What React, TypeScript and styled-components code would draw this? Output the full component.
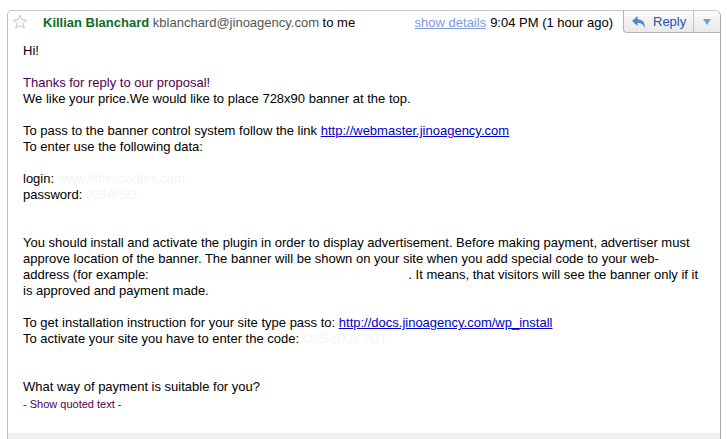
import React from 'react';
import styled, { createGlobalStyle } from 'styled-components';

const GlobalStyle = createGlobalStyle`
  html, body {
    margin: 0;
    padding: 0;
    background: #fff;
  }
  body {
    font-family: "Liberation Sans", Arial, sans-serif;
    font-size: 13px;
    color: #000;
  }
`;

const Page = styled.div`
  padding: 10px 6px 0 7px;
  height: 439px;
  box-sizing: border-box;
`;

const Card = styled.div`
  height: 100%;
  box-sizing: border-box;
  display: flex;
  flex-direction: column;
  border-top: 1px solid #c6c6c6;
  border-left: 1px solid #bdbdbd;
  border-right: 1px solid #a8a8a8;
  border-radius: 5px 6px 0 0;
`;

const Header = styled.div`
  display: flex;
  align-items: flex-start;
  height: 23px;
`;

const StarBox = styled.div`
  width: 16px;
  height: 16px;
  margin: 3px 0 0 4px;
`;

const Sender = styled.div`
  margin: 4px 0 0 15px;
  white-space: nowrap;
`;

const Name = styled.span`
  font-weight: bold;
  color: #0b6d23;
`;

const Email = styled.span`
  color: #555;
`;

const Meta = styled.div`
  margin: 4px 10px 0 auto;
  white-space: nowrap;
`;

const DetailsLink = styled.a`
  color: #7a9be0;
  text-decoration: underline;
  margin-right: 4px;
`;

const ReplyGroup = styled.div`
  display: flex;
  height: 21px;
  border-left: 1px solid #b4b4b4;
  border-bottom: 1px solid #b4b4b4;
  border-radius: 0 5px 0 4px;
  background: linear-gradient(#fbfbfb, #e8e8e8);
`;

const ReplyButton = styled.div`
  display: flex;
  align-items: center;
  gap: 6px;
  width: 70px;
  padding-left: 7px;
  box-sizing: border-box;
  color: #2251b8;
  border-right: 1px solid #c4c4c4;
`;

const MenuButton = styled.div`
  width: 26px;
  display: flex;
  align-items: center;
  justify-content: center;
`;

const Body = styled.div`
  flex: 1;
  padding: 9px 12px 0 15px;
  line-height: 16px;
`;

const Line = styled.div<{ $gapBefore?: number; $purple?: boolean }>`
  margin-top: ${(p) => (p.$gapBefore || 0) * 16}px;
  color: ${(p) => (p.$purple ? '#500050' : '#000')};
  white-space: nowrap;
`;

const Link = styled.a`
  color: #0000cc;
  text-decoration: underline;
`;

const Hidden = styled.span<{ $width?: number; $faint?: boolean }>`
  color: ${(p) => (p.$faint ? '#fdfdfd' : '#f4f4f4')};
  display: ${(p) => (p.$width ? 'inline-block' : 'inline')};
  width: ${(p) => (p.$width ? `${p.$width}px` : 'auto')};
  overflow: hidden;
  vertical-align: top;
`;

const Quoted = styled.div`
  margin-top: 2px;
  font-size: 11px;
  line-height: 14px;
  color: #500050;
`;

const Footer = styled.div`
  height: 6px;
  background: #f0f0f0;
`;

const Star = () => (
  <svg width="16" height="16" viewBox="0 0 16 16">
    <path
      d="M8 1.2l2 4.4 4.7.5-3.5 3.2 1 4.7L8 11.6 3.8 14l1-4.7L1.3 6.1 6 5.6z"
      fill="#fafafa"
      stroke="#c8c8c8"
      strokeWidth="1"
      strokeLinejoin="round"
    />
  </svg>
);

const ReplyArrow = () => (
  <svg width="16" height="14" viewBox="0 0 16 14">
    <path d="M6.5 1 L1 6 L6.5 11 V8 C10 7.6 12.5 9 13.5 13 C14.5 7.5 11.5 4.5 6.5 4.3 Z" fill="#4e86d6" />
  </svg>
);

const Caret = () => (
  <svg width="8" height="6" viewBox="0 0 8 6">
    <path d="M0 0 H8 L4 6 Z" fill="#6f9be0" />
  </svg>
);

export default function App() {
  return (
    <>
      <GlobalStyle />
      <Page>
        <Card>
          <Header>
            <StarBox>
              <Star />
            </StarBox>
            <Sender>
              <Name>Killian Blanchard</Name> <Email>kblanchard@jinoagency.com</Email> to me
            </Sender>
            <Meta>
              <DetailsLink href="#">show details</DetailsLink>9:04 PM (1 hour ago)
            </Meta>
            <ReplyGroup>
              <ReplyButton>
                <ReplyArrow />
                Reply
              </ReplyButton>
              <MenuButton>
                <Caret />
              </MenuButton>
            </ReplyGroup>
          </Header>
          <Body>
            <Line>Hi!</Line>
            <Line $gapBefore={1} $purple>Thanks for reply to our proposal!</Line>
            <Line>We like your price.We would like to place 728x90 banner at the top.</Line>
            <Line $gapBefore={1}>
              To pass to the banner control system follow the link{' '}
              <Link href="#">http://webmaster.jinoagency.com</Link>
            </Line>
            <Line>To enter use the following data:</Line>
            <Line $gapBefore={1}>
              login: <Hidden>www.littlesoodies.com</Hidden>
            </Line>
            <Line>
              password: <Hidden>JGNF5G</Hidden>
            </Line>
            <Line $gapBefore={2}>
              You should install and activate the plugin in order to display advertisement. Before making payment, advertiser must
            </Line>
            <Line>
              approve location of the banner. The banner will be shown on your site when you add special code to your web-
            </Line>
            <Line>
              address (for example: <Hidden $width={256} $faint>http://www.littlesoodies.com/?jino=1</Hidden>. It means, that visitors will
              see the banner only if it
            </Line>
            <Line>is approved and payment made.</Line>
            <Line $gapBefore={1}>
              To get installation instruction for your site type pass to:{' '}
              <Link href="#">http://docs.jinoagency.com/wp_install</Link>
            </Line>
            <Line>
              To activate your site you have to enter the code: <Hidden>O8S-5XA-TUT</Hidden>
            </Line>
            <Line $gapBefore={2}>What way of payment is suitable for you?</Line>
            <Quoted>- Show quoted text -</Quoted>
          </Body>
          <Footer />
        </Card>
      </Page>
    </>
  );
}
